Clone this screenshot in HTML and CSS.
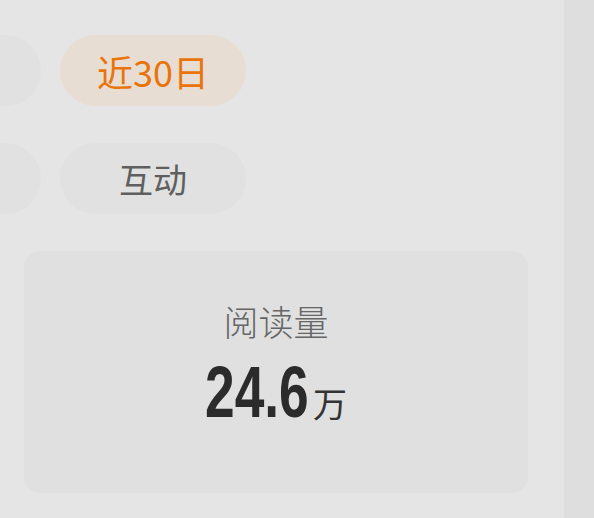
FILE: index.html
```html
<!DOCTYPE html>
<html lang="zh-CN">
<head>
    <meta charset="UTF-8">
    <meta name="viewport" content="width=device-width, initial-scale=1.0">
    <title>数据概览</title>
    <link rel="stylesheet" href="styles.css">
</head>
<body>
    <div class="page">
        <div class="main">
            <div class="tabs">
                <div class="tab-row">
                    <span class="pill"></span>
                    <span class="pill pill-active">近30日</span>
                </div>
                <div class="tab-row">
                    <span class="pill"></span>
                    <span class="pill">互动</span>
                </div>
            </div>

            <div class="stat-card">
                <div class="stat-label">阅读量</div>
                <div class="stat-value">
                    <span class="stat-num">24.6</span><span class="stat-unit">万</span>
                </div>
            </div>
        </div>
        <div class="side"></div>
    </div>
</body>
</html>
```

FILE: styles.css
```css
* { box-sizing: border-box; }
html, body {
    margin: 0;
    height: 100%;
}
body {
    font-family: "Noto Sans CJK SC", "Noto Sans", sans-serif;
    background: #e5e5e5;
    overflow: hidden;
}
.page {
    display: flex;
    height: 100%;
}
.main {
    flex: 1;
    padding: 35px 36px 0 24px;
    overflow: hidden;
}
.side {
    width: 30px;
    background: #dedede;
}
.tabs {
    display: flex;
    flex-direction: column;
    gap: 37px;
    margin-left: -169px;
}
.tab-row {
    display: flex;
    gap: 19px;
}
.pill {
    width: 186px;
    height: 71px;
    border-radius: 36px;
    background: #e1e1e1;
    color: #5f5f5f;
    font-size: 34px;
    display: flex;
    align-items: center;
    justify-content: center;
}
.pill-active {
    background: #e8ddd3;
    color: #e9740b;
    font-size: 36px;
}
.stat-card {
    margin-top: 37px;
    height: 242px;
    border-radius: 16px;
    background: #e0e0e0;
    display: flex;
    flex-direction: column;
    align-items: center;
    padding-top: 46px;
}
.stat-label {
    font-size: 35px;
    color: #666;
    line-height: 48px;
    font-weight: 300;
}
.stat-value {
    margin-top: 11px;
    display: flex;
    align-items: baseline;
    gap: 4px;
}
.stat-num {
    display: inline-block;
    width: 104px;
    font-family: "Liberation Sans", sans-serif;
    font-weight: bold;
    font-size: 72px;
    line-height: 72px;
    color: #2b2b2b;
    transform: scaleX(0.74);
    transform-origin: left center;
    white-space: nowrap;
}
.stat-unit {
    font-size: 34px;
    color: #333;
}
```
